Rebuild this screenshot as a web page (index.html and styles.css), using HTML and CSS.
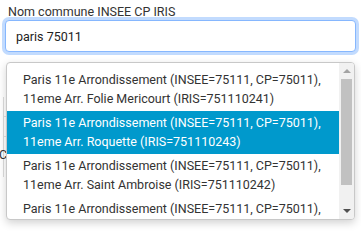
FILE: index.html
```html
<!DOCTYPE html>
<html lang="fr">
    <head>
        <title>Recherche IRIS</title>
        <link rel="stylesheet" href="styles.css">
    </head>
    <body>
        <!-- Search field -->
        <div class="field">
            <label class="field-label" for="commune">Nom commune INSEE CP IRIS</label>
            <input class="field-input" id="commune" type="text" value="paris 75011">
        </div>

        <!-- Content under the menu -->
        <div class="results">
            <div class="results-row"></div>
            <div class="results-row"></div>
            <div class="results-text">C</div>
        </div>

        <!-- Autocomplete menu -->
        <div class="menu">
            <ul class="menu-list">
                <li class="menu-item">Paris 11e Arrondissement (INSEE=75111, CP=75011),<br>11eme Arr. Folie Mericourt (IRIS=751110241)</li>
                <li class="menu-item active">Paris 11e Arrondissement (INSEE=75111, CP=75011),<br>11eme Arr. Roquette (IRIS=751110243)</li>
                <li class="menu-item">Paris 11e Arrondissement (INSEE=75111, CP=75011),<br>11eme Arr. Saint Ambroise (IRIS=751110242)</li>
                <li class="menu-item">Paris 11e Arrondissement (INSEE=75111, CP=75011),<br>11eme Arr. Sainte Marguerite (IRIS=751110244)</li>
            </ul>
            <div class="scrollbar">
                <div class="scroll-btn"><span class="arrow-up"></span></div>
                <div class="scroll-thumb"></div>
                <div class="scroll-btn bottom"><span class="arrow-down"></span></div>
            </div>
        </div>
    </body>
</html>
```

FILE: styles.css
```css
body { font-family: Roboto, "Open Sans", Arial, sans-serif; margin: 0; color: #333; background: #fff; position: relative; width: 361px; height: 234px; overflow: hidden; }

/* Search field */
.field { padding: 3px 6px 0 5px; }
.field-label { display: block; font-size: 12.5px; line-height: 17px; padding-left: 3px; color: #333; }
.field-input {
    display: block;
    box-sizing: border-box;
    width: 351px;
    height: 32px;
    margin: 0;
    padding: 0 10px;
    font-family: inherit;
    font-size: 12.5px;
    color: #222;
    border: 1px solid #86b7fe;
    border-radius: 4px;
    box-shadow: 0 0 0 3px rgba(13, 110, 253, 0.25);
    outline: none;
}

/* Content under the menu */
.results { margin: 48px 6px 0 3px; border-left: 1px solid #ddd; border-right: 1px solid #ddd; height: 80px; }
.results-row { height: 19px; border-bottom: 1px solid #e2e2e2; margin-top: 0; }
.results-row:first-child { margin-top: -3px; }
.results-text { font-size: 12.5px; margin: 10px 0 0 -5px; }

/* Autocomplete menu */
.menu {
    position: absolute;
    left: 6px;
    top: 62px;
    width: 347px;
    height: 156px;
    display: flex;
    background: #fff;
    border: 1px solid #c8c8c8;
    border-radius: 4px;
    box-shadow: 0 3px 8px rgba(0, 0, 0, 0.18);
    overflow: hidden;
}
.menu-list { flex: 1; list-style: none; margin: 0; padding: 5px 0 0 0; overflow: hidden; }
.menu-item { padding: 3px 6px 3px 16px; font-size: 12.5px; line-height: 18.5px; color: #333; white-space: nowrap; }
.menu-item.active { background-color: #0099cc; color: #fff; }

.scrollbar { width: 15px; background: #f1f1f1; display: flex; flex-direction: column; }
.scroll-btn { height: 16px; display: flex; align-items: center; justify-content: center; }
.scroll-btn.bottom { margin-top: auto; }
.scroll-thumb { height: 106px; margin: 0 2px; background: #c1c1c1; }
.arrow-up { width: 0; height: 0; border-left: 4px solid transparent; border-right: 4px solid transparent; border-bottom: 4px solid #a3a3a3; }
.arrow-down { width: 0; height: 0; border-left: 4px solid transparent; border-right: 4px solid transparent; border-top: 4px solid #505050; }
```
